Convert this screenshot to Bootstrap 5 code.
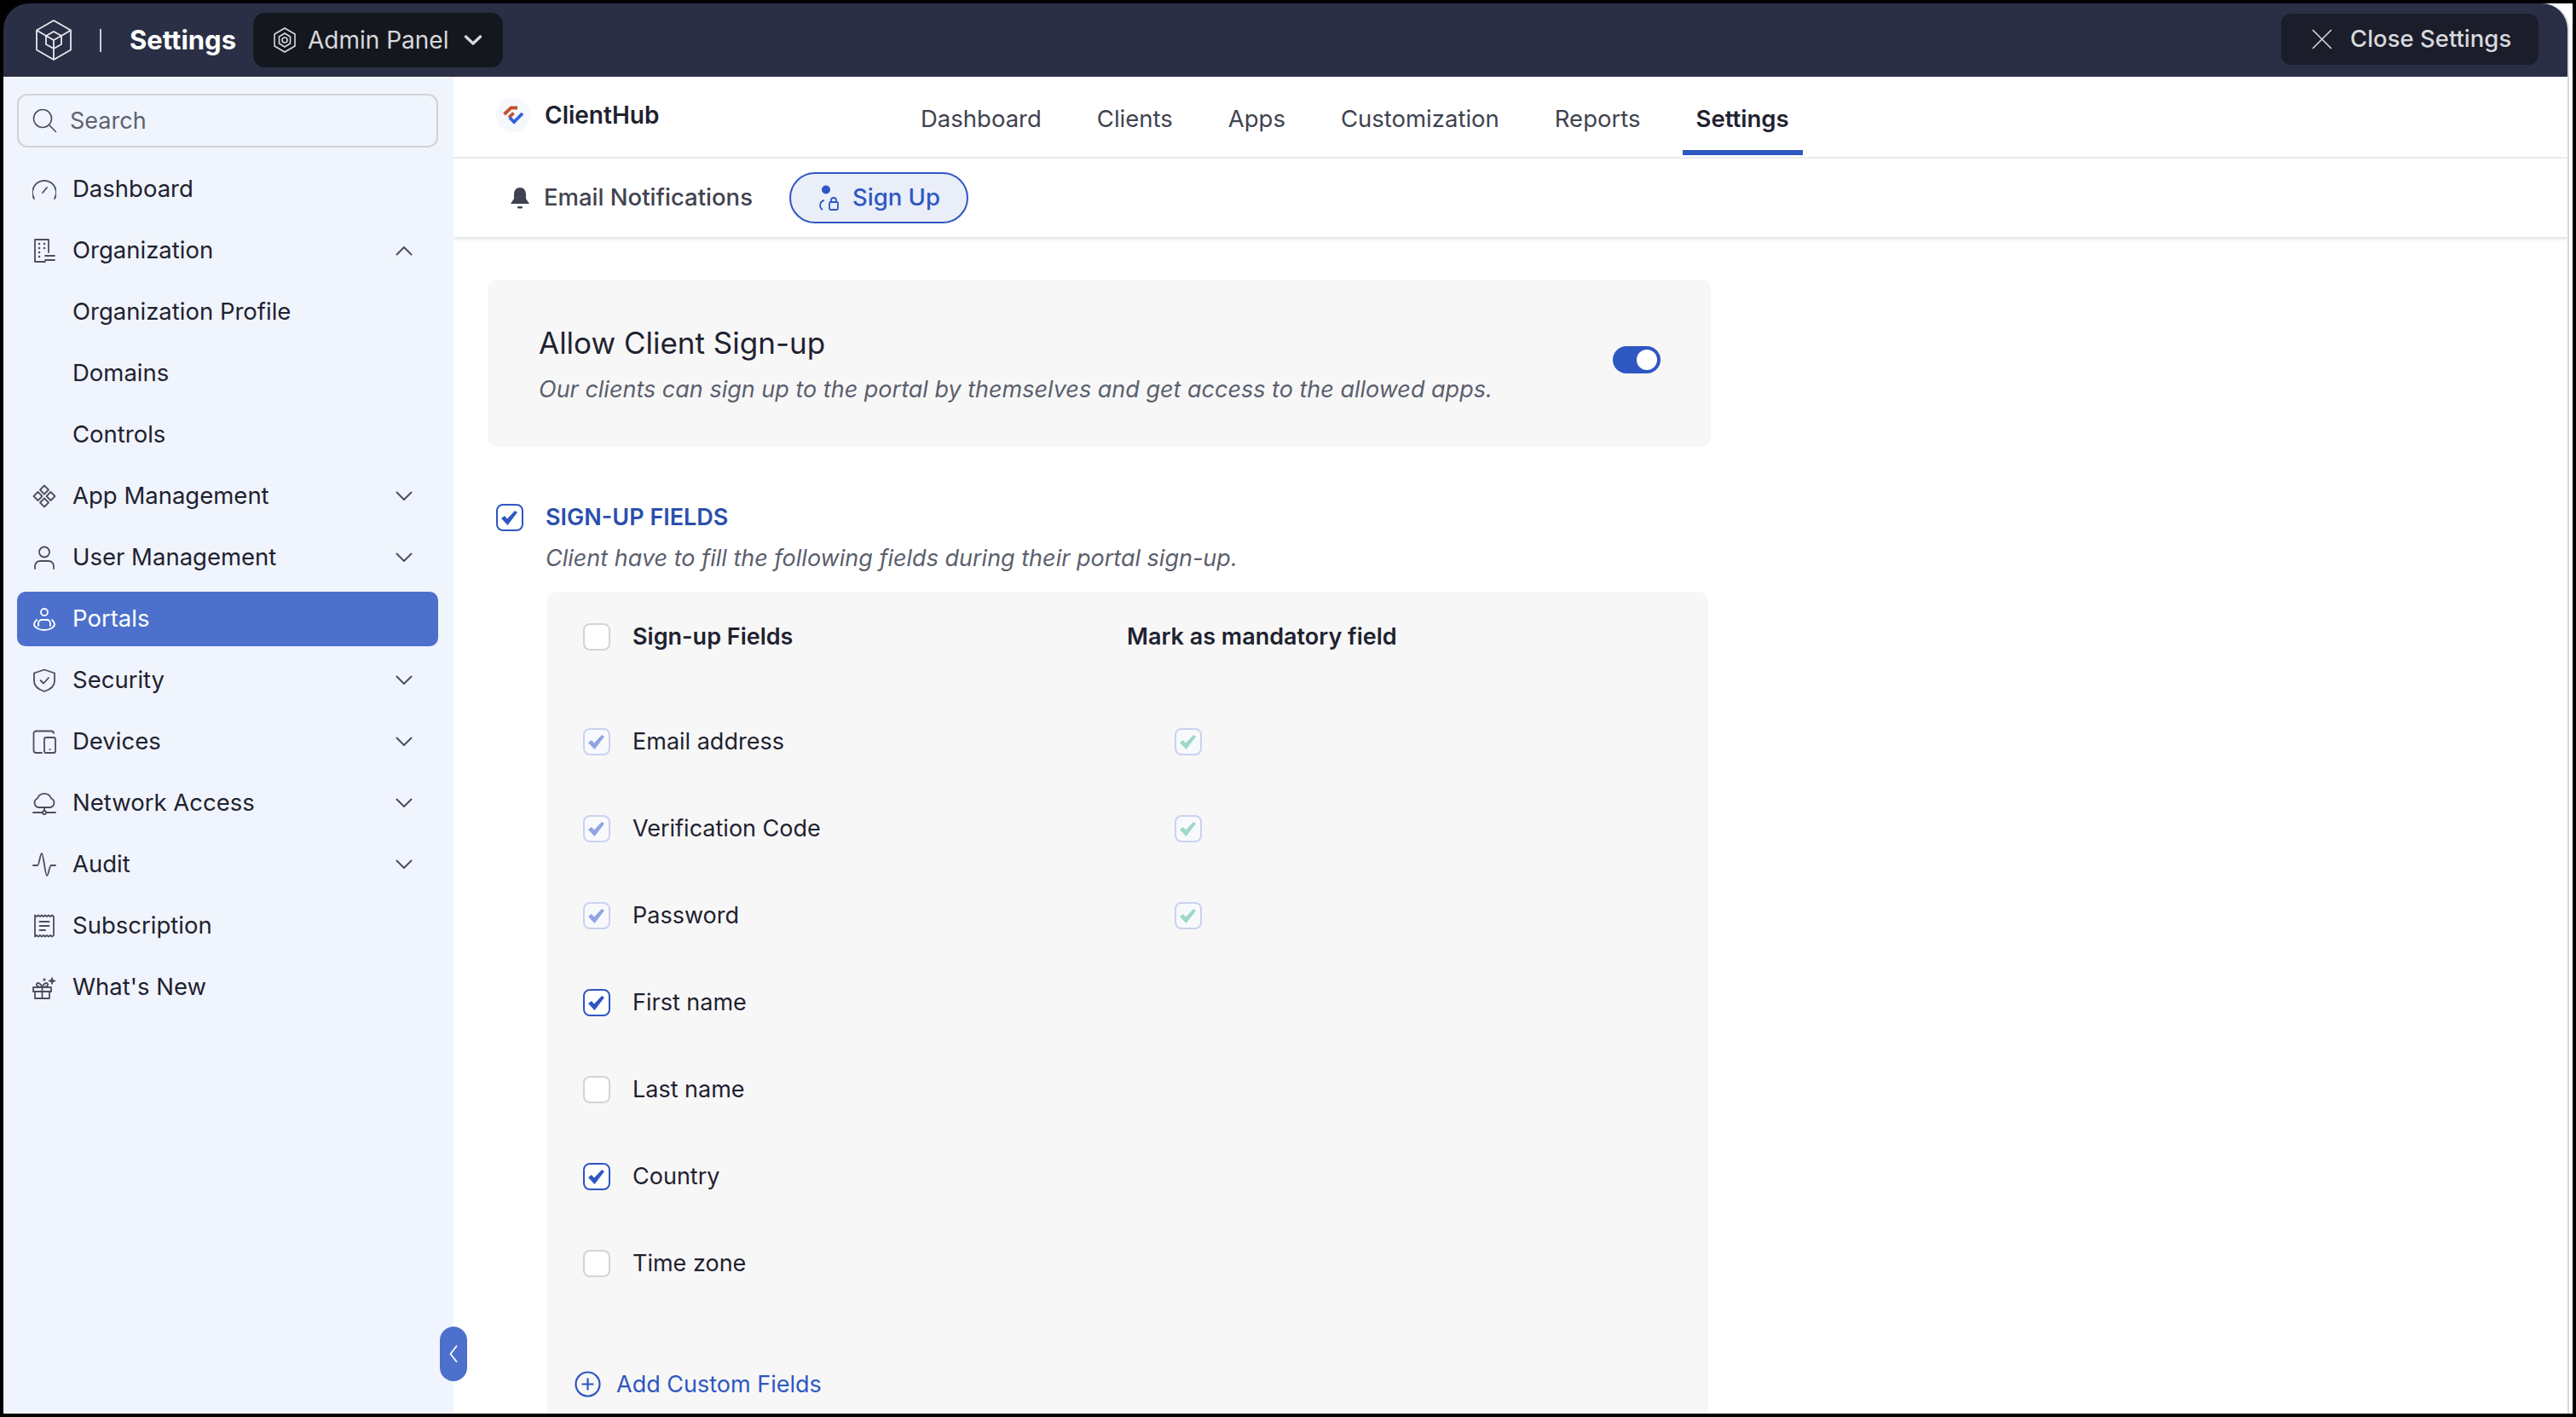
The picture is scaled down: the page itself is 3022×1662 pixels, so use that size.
<!DOCTYPE html>
<html lang="en">
<head>
    <meta charset="UTF-8">
    <meta name="viewport" content="width=device-width, initial-scale=1.0">
    <title>Settings - Sign Up</title>
    <link rel="stylesheet" href="https://cdn.jsdelivr.net/npm/bootstrap@5.3.0/dist/css/bootstrap.min.css">
    <script src="https://cdn.jsdelivr.net/npm/bootstrap@5.3.0/dist/js/bootstrap.bundle.min.js"></script>

    <style>
        html, body {
            height: 100%;
            overflow: hidden;
        }
        body {
            font-family: "Inter", "Noto Sans", sans-serif;
            color: #1f2230;
            font-size: 27px;
        }
        .shell {
            width: 100vw;
            height: 100vh;
            border: 4px solid #000;
            padding-right: 4px;
            background: linear-gradient(#000, #000) top left / 40px 40px no-repeat, #fff;
        }
        .app-box {
            border-right: 2px solid #d9d9dc;
            border-radius: 30px 30px 0 0;
        }
        .top-bar {
            height: 86px;
            background: #2a2f45;
            border-radius: 30px 30px 0 0;
            padding: 0 34px 0 38px;
            flex: none;
        }
        .top-sep {
            width: 2px;
            height: 27px;
            background: #c9cbd3;
            margin: 0 33px;
        }
        .top-title {
            color: #fff;
            font-size: 31px;
            font-weight: 700;
            width: 129px;
            white-space: nowrap;
        }
        .admin-pill {
            height: 64px;
            width: 293px;
            margin: 0 0 0 16px;
            padding: 0 24px;
            gap: 14px;
            background: #15171f;
            border-radius: 14px;
            color: #d8d9dc;
            font-size: 28px;
        }
        .close-pill {
            height: 60px;
            width: 302px;
            margin-top: -2px;
            padding: 0 0 0 36px;
            gap: 21px;
            background: #1b1d2b;
            border: 0;
            border-radius: 12px;
            color: #d8d9dc;
            font-size: 27.500px;
            font-weight: 500;
        }
        .side-bar {
            width: 528px;
            flex: none;
            background: #f0f4fc;
            padding: 20px 18px 0 16px;
            position: relative;
        }
        .side-search {
            height: 63px;
            border: 2px solid #d0d3d8;
            border-radius: 12px;
            padding: 0 16px;
            gap: 15px;
            color: #5d6270;
            margin-bottom: 17px;
        }
        .side-search span {
            padding-top: 2px;
        }
        .side-link {
            height: 64px;
            padding: 0 30px 0 18px;
            gap: 19px;
            color: #1f2230;
            border-radius: 10px;
            font-size: 27.500px;
        }
        .side-link.is-sub {
            padding-left: 65px;
        }
        .side-link.active {
            background: #4d70cc;
            color: #fff;
        }
        .side-ico {
            width: 28px;
            height: 28px;
            flex: none;
            fill: none;
            stroke: #4b4f5e;
            stroke-width: 1.8;
            stroke-linecap: round;
            stroke-linejoin: round;
        }
        .active .side-ico {
            stroke: #fff;
        }
        .side-chev {
            width: 20px;
            height: 12px;
            margin-left: auto;
            flex: none;
            fill: none;
            stroke: #4b4f5e;
            stroke-width: 2;
            stroke-linecap: round;
            stroke-linejoin: round;
        }
        .collapse-tab {
            position: absolute;
            right: -16px;
            bottom: 38px;
            width: 32px;
            height: 64px;
            border-radius: 16px;
            background: #4d70cc;
            z-index: 2;
        }
        .main-pane {
            min-width: 0;
            overflow: hidden;
        }
        .app-nav {
            height: 96px;
            border-bottom: 2px solid #eeeff1;
            padding-left: 50px;
            flex: none;
        }
        .app-brand {
            width: 482px;
            height: 90px;
            gap: 17px;
            font-weight: 600;
            font-size: 28px;
        }
        .logo-dot {
            width: 40px;
            height: 40px;
            border-radius: 50%;
            background: #f5f8fd;
        }
        .app-nav .nav {
            gap: 33px;
        }
        .app-link {
            height: 92px;
            padding: 14px 16px 0;
            border-bottom: 6px solid transparent;
            color: #40434f;
            font-size: 27.500px;
        }
        .app-link.active {
            color: #1f2230;
            font-weight: 600;
            border-bottom-color: #2f57c2;
        }
        .sub-tabs {
            height: 92px;
            padding-left: 67px;
            flex: none;
            box-shadow: 0 2px 4px rgba(50, 70, 110, 0.18);
            position: relative;
        }
        .sub-tab {
            padding: 0;
            gap: 17px;
            color: #40434f;
            font-weight: 500;
            font-size: 27.500px;
        }
        .sub-tab.active {
            height: 60px;
            margin-left: 43px;
            padding: 0 31px;
            gap: 15px;
            border: 2px solid #2f57c2;
            border-radius: 30px;
            background: #e9eef9;
            color: #2f57c2;
        }
        .page-body {
            padding: 50px 0 0 40px;
        }
        .allow-card {
            width: 1435px;
            height: 196px;
            padding: 0 59px 0 60px;
            background: #f7f7f7;
            border: 0;
            border-radius: 12px;
        }
        .allow-title {
            font-size: 35px;
            line-height: 42px;
            color: #1f2230;
            margin: 4px 0 16px;
        }
        .hint-text {
            font-style: italic;
            color: #5b5f6e;
            font-size: 27px;
            line-height: 36px;
        }
        .allow-switch {
            padding: 0;
            margin: 0 0 8px;
            min-height: 0;
        }
        .allow-switch .form-check-input {
            width: 56px;
            height: 32px;
            margin: 0;
            border: 0;
            background-color: #2f57c2;
            float: none;
            display: block;
        }
        .section-head {
            margin: 63px 0 0 10px;
            gap: 26px;
            color: #2a4fad;
            font-weight: 600;
            font-size: 27px;
        }
        .section-hint {
            margin: 9px 0 21px 68px;
        }
        .fld-panel {
            width: 1362px;
            margin-left: 70px;
            padding-bottom: 40px;
            background: #f7f7f7;
            border-radius: 12px 12px 0 0;
        }
        .fld-head {
            height: 103px;
            padding: 5px 0 0 42px;
            border-bottom: 1px solid #f4f4f5;
            font-weight: 600;
            margin-bottom: 23px;
        }
        .fld-head .fld-name {
            width: 638px;
        }
        .fld-row {
            height: 102px;
            margin: 0 24px;
            padding-left: 18px;
            border-bottom: 1px solid #f3f3f4;
        }
        .fld-row .fld-name {
            width: 694px;
        }
        .fld-name {
            gap: 26px;
            flex: none;
        }
        .fld-check.form-check-input {
            width: 32px;
            height: 32px;
            margin: 0;
            flex: none;
            float: none;
            border: 2px solid #d4d4d6;
            border-radius: 8px;
            background-color: #fff;
            background-size: 28px 28px;
            opacity: 1;
        }
        .fld-check.form-check-input:checked {
            border-color: #2f57c2;
            background-color: #fff;
            background-image: url("data:image/svg+xml,%3Csvg xmlns='http://www.w3.org/2000/svg' viewBox='0 0 28 28'%3E%3Cpath d='M4 15L8 12L11 15.500L20 6L23 8L11.500 23Z' fill='%232f57c2'/%3E%3C/svg%3E");
        }
        .fld-check.form-check-input:checked:disabled {
            border-color: #c9d3ef;
            background-color: #f8f9fc;
            background-image: url("data:image/svg+xml,%3Csvg xmlns='http://www.w3.org/2000/svg' viewBox='0 0 28 28'%3E%3Cpath d='M4 15L8 12L11 15.500L20 6L23 8L11.500 23Z' fill='%238fa5e3'/%3E%3C/svg%3E");
        }
        .fld-check.is-green.form-check-input:checked:disabled {
            background-image: url("data:image/svg+xml,%3Csvg xmlns='http://www.w3.org/2000/svg' viewBox='0 0 28 28'%3E%3Cpath d='M4 15L8 12L11 15.500L20 6L23 8L11.500 23Z' fill='%239fd8c4'/%3E%3C/svg%3E");
        }
        .fld-foot {
            margin-top: 43px;
            padding: 26px 0 0 32px;
            gap: 18px;
            border-top: 1px solid #f4f4f5;
            color: #2f57c2;
            font-size: 27px;
        }
    </style>
</head>
<body>

<div class="shell d-flex flex-column">
    <div class="app-box d-flex flex-column flex-grow-1" style="min-height:0">

        <!-- top bar -->
        <header class="top-bar d-flex align-items-center">
            <svg width="42" height="48" viewBox="0 0 42 48" fill="none" stroke="#e8e9ee" stroke-width="1.800" stroke-linejoin="round">
                <path d="M21 1L41 12.500V35.500L21 47L1 35.500V12.500Z"/>
                <path d="M21 14L30 19V29L21 34L12 29V19Z"/>
                <path d="M12 19L21 24L30 19M21 24V34M1 12.500L12 19M41 12.500L30 19M21 34V47"/>
            </svg>
            <span class="top-sep"></span>
            <span class="top-title">Settings</span>
            <div class="admin-pill d-flex align-items-center">
                <svg width="26" height="30" viewBox="0 0 26 30" fill="none" stroke="#d8d9dc" stroke-width="1.600">
                    <path d="M13 1L25 8V22L13 29L1 22V8Z"/>
                    <path d="M13 7L19.500 11V19L13 23L6.500 19V11Z"/>
                    <circle cx="13" cy="15" r="3"/>
                </svg>
                <span>Admin Panel</span>
                <svg class="ms-auto" width="22" height="14" viewBox="0 0 22 14" fill="none" stroke="#d8d9dc" stroke-width="3.400" stroke-linecap="round" stroke-linejoin="round"><path d="M2.500 3L11 11L19.500 3"/></svg>
            </div>
            <button type="button" class="btn close-pill ms-auto d-flex align-items-center">
                <svg width="24" height="24" viewBox="0 0 24 24" fill="none" stroke="#d8d9dc" stroke-width="1.600"><path d="M1 1L23 23M23 1L1 23"/></svg>
                Close Settings
            </button>
        </header>

        <div class="d-flex flex-grow-1" style="min-height:0">

            <!-- sidebar -->
            <aside class="side-bar">
                <div class="side-search d-flex align-items-center">
                    <svg width="29" height="29" viewBox="0 0 29 29" fill="none" stroke="#4b4f5e" stroke-width="1.600" stroke-linecap="round"><circle cx="12" cy="12" r="10.500"/><path d="M20 20L27.500 27.500"/></svg>
                    <span>Search</span>
                </div>
                <nav class="nav flex-column gap-2">
                    <a class="nav-link side-link d-flex align-items-center" href="#">
                        <svg class="side-ico" viewBox="0 0 28 28"><path d="M2 25A14 14 0 1 1 26 25"/><path d="M12 18L17 12"/></svg>
                        Dashboard
                    </a>
                    <a class="nav-link side-link d-flex align-items-center" href="#">
                        <svg class="side-ico" viewBox="0 0 28 28"><path d="M15 27H3V1H19V16"/><path d="M15 20H26M15 25H26" /><path d="M8 6h.1M14 6h.1M8 11h.1M14 11h.1M8 16h.1M8 21h.1" stroke-width="2.400"/></svg>
                        Organization
                        <svg class="side-chev" viewBox="0 0 20 12"><path d="M1.500 10.500L10 2L18.500 10.500"/></svg>
                    </a>
                    <a class="nav-link side-link is-sub d-flex align-items-center" href="#">Organization Profile</a>
                    <a class="nav-link side-link is-sub d-flex align-items-center" href="#">Domains</a>
                    <a class="nav-link side-link is-sub d-flex align-items-center" href="#">Controls</a>
                    <a class="nav-link side-link d-flex align-items-center" href="#">
                        <svg class="side-ico" viewBox="0 0 28 28"><path d="M14 1.500L19 6.500L14 11.500L9 6.500Z"/><path d="M6.500 9L11.500 14L6.500 19L1.500 14Z"/><path d="M21.500 9L26.500 14L21.500 19L16.500 14Z"/><path d="M14 16.500L19 21.500L14 26.500L9 21.500Z"/></svg>
                        App Management
                        <svg class="side-chev" viewBox="0 0 20 12"><path d="M1.500 1.500L10 10L18.500 1.500"/></svg>
                    </a>
                    <a class="nav-link side-link d-flex align-items-center" href="#">
                        <svg class="side-ico" viewBox="0 0 28 28"><circle cx="14" cy="7.500" r="6"/><path d="M3 27V24A6 6 0 0 1 9 18H19A6 6 0 0 1 25 24V27"/></svg>
                        User Management
                        <svg class="side-chev" viewBox="0 0 20 12"><path d="M1.500 1.500L10 10L18.500 1.500"/></svg>
                    </a>
                    <a class="nav-link side-link active d-flex align-items-center" href="#">
                        <svg class="side-ico" viewBox="0 0 28 28"><circle cx="14" cy="6" r="4"/><path d="M7 22V19A4 4 0 0 1 11 15H17A4 4 0 0 1 21 19V22"/><path d="M5 15A10 10 0 0 0 2 20C2 24 8 27 14 27S26 24 26 20A10 10 0 0 0 23 15"/></svg>
                        Portals
                    </a>
                    <a class="nav-link side-link d-flex align-items-center" href="#">
                        <svg class="side-ico" viewBox="0 0 28 28"><path d="M14 1.500L26 5.500V15C26 21 20 25 14 27C8 25 2 21 2 15V5.500Z"/><path d="M9.500 14L13 17.500L19 11"/></svg>
                        Security
                        <svg class="side-chev" viewBox="0 0 20 12"><path d="M1.500 1.500L10 10L18.500 1.500"/></svg>
                    </a>
                    <a class="nav-link side-link d-flex align-items-center" href="#">
                        <svg class="side-ico" viewBox="0 0 28 28"><path d="M11 27H4A3 3 0 0 1 1.500 24V4A3 3 0 0 1 4 1.500H22A3 3 0 0 1 25 4"/><rect x="14" y="9" width="13" height="18" rx="2"/><path d="M20.500 23h.1" stroke-width="2"/></svg>
                        Devices
                        <svg class="side-chev" viewBox="0 0 20 12"><path d="M1.500 1.500L10 10L18.500 1.500"/></svg>
                    </a>
                    <a class="nav-link side-link d-flex align-items-center" href="#">
                        <svg class="side-ico" viewBox="0 0 28 28"><path d="M7 19A5.500 5.500 0 0 1 6 8.500A8.500 8.500 0 0 1 22 8.500A5.500 5.500 0 0 1 21 19Z"/><path d="M14 19V23M1 25H11M17 25H27"/><circle cx="14" cy="25" r="2"/></svg>
                        Network Access
                        <svg class="side-chev" viewBox="0 0 20 12"><path d="M1.500 1.500L10 10L18.500 1.500"/></svg>
                    </a>
                    <a class="nav-link side-link d-flex align-items-center" href="#">
                        <svg class="side-ico" viewBox="0 0 28 28"><path d="M1 15H6C8 15 9 1 11 1C13 1 15 27 17 27C19 27 20 15 22 15H27"/></svg>
                        Audit
                        <svg class="side-chev" viewBox="0 0 20 12"><path d="M1.500 1.500L10 10L18.500 1.500"/></svg>
                    </a>
                    <a class="nav-link side-link d-flex align-items-center" href="#">
                        <svg class="side-ico" viewBox="0 0 28 28"><path d="M3 1.500L5 3L7 1.500L9 3L11 1.500L13 3L15 1.500L17 3L19 1.500L21 3L23 1.500L25 3V25L23 26.500L21 25L19 26.500L17 25L15 26.500L13 25L11 26.500L9 25L7 26.500L5 25L3 26.500Z"/><path d="M8.500 9H19.500M8.500 14H19.500M8.500 19H15"/></svg>
                        Subscription
                    </a>
                    <a class="nav-link side-link d-flex align-items-center" href="#">
                        <svg class="side-ico" viewBox="0 0 28 28"><rect x="1" y="14" width="21" height="5"/><path d="M3 19V27H20V19M11.500 14V27M11.500 14C7 14 4 12 5 10C6 8 10 9 11.500 14C13 9 17 8 18 10C19 12 16 14 11.500 14Z"/><path d="M23 1.500L24.500 5L28 6.500L24.500 8L23 11.500L21.500 8L18 6.500L21.500 5Z" fill="#4b4f5e" stroke="none"/><path d="M14 2.500L14.800 4.200L16.500 5L14.800 5.800L14 7.500L13.200 5.800L11.500 5L13.200 4.200Z" fill="#4b4f5e" stroke="none"/></svg>
                        What's New
                    </a>
                </nav>
                <div class="collapse-tab d-flex align-items-center justify-content-center">
                    <svg width="10" height="20" viewBox="0 0 10 20" fill="none" stroke="#fff" stroke-width="1.800" stroke-linecap="round" stroke-linejoin="round"><path d="M8.500 1L1.500 10L8.500 19"/></svg>
                </div>
            </aside>

            <!-- main -->
            <main class="main-pane flex-grow-1 d-flex flex-column">
                <div class="app-nav d-flex align-items-start">
                    <div class="app-brand d-flex align-items-center">
                        <span class="logo-dot d-flex align-items-center justify-content-center flex-none">
                            <svg width="26" height="22" viewBox="0 0 26 22" fill="none" stroke-width="3.800">
                                <path d="M2.500 10L10.500 2.500H18M8 14L13.500 8.500" stroke="#c2512b"/>
                                <path d="M9 14L14 19L24 9" stroke="#2f62dc"/>
                            </svg>
                        </span>
                        <span>ClientHub</span>
                    </div>
                    <nav class="nav">
                        <a class="nav-link app-link d-flex align-items-center" href="#">Dashboard</a>
                        <a class="nav-link app-link d-flex align-items-center" href="#">Clients</a>
                        <a class="nav-link app-link d-flex align-items-center" href="#">Apps</a>
                        <a class="nav-link app-link d-flex align-items-center" href="#">Customization</a>
                        <a class="nav-link app-link d-flex align-items-center" href="#">Reports</a>
                        <a class="nav-link app-link active d-flex align-items-center" href="#">Settings</a>
                    </nav>
                </div>

                <nav class="sub-tabs nav align-items-center">
                    <a class="nav-link sub-tab d-flex align-items-center" href="#">
                        <svg width="22" height="25" viewBox="0 0 22 25" fill="#40434f"><path d="M11 0C15.500 0 18 3.500 18 8V13L22 19H0L4 13V8C4 3.500 6.500 0 11 0Z"/><rect x="8" y="22" width="6" height="2.500" rx="1.200"/></svg>
                        Email Notifications
                    </a>
                    <a class="nav-link sub-tab active d-flex align-items-center" href="#">
                        <svg width="26" height="30" viewBox="0 0 26 30" fill="none" stroke="#2f57c2" stroke-width="1.800"><circle cx="10" cy="5.500" r="5" fill="#2f57c2" stroke="none"/><path d="M8 18A6 6 0 0 0 6 29"/><rect x="14" y="20" width="10" height="9" rx="1.500"/><path d="M16 20V18A3 3 0 0 1 22 18V20"/></svg>
                        Sign Up
                    </a>
                </nav>

                <div class="page-body flex-grow-1">
                    <div class="card allow-card flex-row align-items-center justify-content-between">
                        <div>
                            <h2 class="allow-title fw-normal">Allow Client Sign-up</h2>
                            <div class="hint-text">Our clients can sign up to the portal by themselves and get access to the allowed apps.</div>
                        </div>
                        <div class="form-check form-switch allow-switch">
                            <input class="form-check-input" type="checkbox" role="switch" checked aria-label="Allow Client Sign-up">
                        </div>
                    </div>

                    <div class="section-head d-flex align-items-center">
                        <input class="form-check-input fld-check" type="checkbox" checked aria-label="Sign-up fields">
                        <span>SIGN-UP FIELDS</span>
                    </div>
                    <div class="section-hint hint-text">Client have to fill the following fields during their portal sign-up.</div>

                    <div class="fld-panel">
                        <div class="fld-head d-flex align-items-center">
                            <div class="fld-name d-flex align-items-center">
                                <input class="form-check-input fld-check" type="checkbox" aria-label="All fields">
                                <span>Sign-up Fields</span>
                            </div>
                            <span>Mark as mandatory field</span>
                        </div>

                        <div class="fld-row d-flex align-items-center">
                            <div class="fld-name d-flex align-items-center"><input class="form-check-input fld-check" type="checkbox" checked disabled aria-label="Email address"><span>Email address</span></div>
                            <input class="form-check-input fld-check is-green" type="checkbox" checked disabled aria-label="Email address mandatory">
                        </div>
                        <div class="fld-row d-flex align-items-center">
                            <div class="fld-name d-flex align-items-center"><input class="form-check-input fld-check" type="checkbox" checked disabled aria-label="Verification Code"><span>Verification Code</span></div>
                            <input class="form-check-input fld-check is-green" type="checkbox" checked disabled aria-label="Verification Code mandatory">
                        </div>
                        <div class="fld-row d-flex align-items-center">
                            <div class="fld-name d-flex align-items-center"><input class="form-check-input fld-check" type="checkbox" checked disabled aria-label="Password"><span>Password</span></div>
                            <input class="form-check-input fld-check is-green" type="checkbox" checked disabled aria-label="Password mandatory">
                        </div>
                        <div class="fld-row d-flex align-items-center">
                            <div class="fld-name d-flex align-items-center"><input class="form-check-input fld-check" type="checkbox" checked aria-label="First name"><span>First name</span></div>
                        </div>
                        <div class="fld-row d-flex align-items-center">
                            <div class="fld-name d-flex align-items-center"><input class="form-check-input fld-check" type="checkbox" aria-label="Last name"><span>Last name</span></div>
                        </div>
                        <div class="fld-row d-flex align-items-center">
                            <div class="fld-name d-flex align-items-center"><input class="form-check-input fld-check" type="checkbox" checked aria-label="Country"><span>Country</span></div>
                        </div>
                        <div class="fld-row d-flex align-items-center">
                            <div class="fld-name d-flex align-items-center"><input class="form-check-input fld-check" type="checkbox" aria-label="Time zone"><span>Time zone</span></div>
                        </div>

                        <div class="fld-foot d-flex align-items-center">
                            <svg width="31" height="31" viewBox="0 0 31 31" fill="none" stroke="#2f57c2" stroke-width="2.200"><circle cx="15.500" cy="15.500" r="14"/><path d="M15.500 8.500V22.500M8.500 15.500H22.500"/></svg>
                            <span>Add Custom Fields</span>
                        </div>
                    </div>
                </div>
            </main>
        </div>
    </div>
</div>

</body>
</html>
